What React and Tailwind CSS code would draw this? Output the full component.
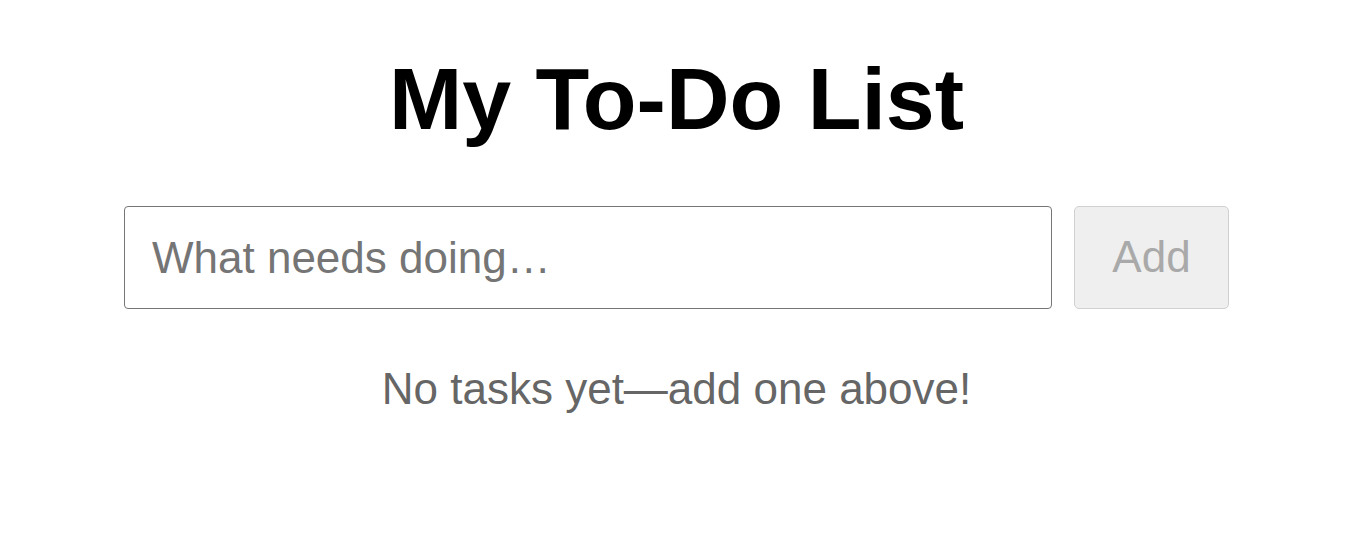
import { useState } from 'react';

export default function App() {
  const [tasks, setTasks] = useState([]);
  const [text, setText] = useState('');

  function addTask(e) {
    e.preventDefault();
    if (!text.trim()) return;
    setTasks(ts => [...ts, { id: Date.now(), title: text.trim() }]);
    setText('');
  }

  return (
    <div className="min-h-screen bg-white flex justify-center pr-[4px] font-['Liberation_Sans',Arial,sans-serif]">
      <div className="w-[1105px]">
        <h1 className="mt-[48px] text-center text-[88px] leading-[1.15] font-bold text-black">My To-Do List</h1>

        <form onSubmit={addTask} className="mt-[57px] flex gap-[22px]">
          <input
            value={text}
            onChange={e => setText(e.target.value)}
            placeholder="What needs doing…"
            className="flex-1 h-[103px] px-[27px] text-[44px] leading-[1.15] text-black placeholder:text-[#757575] border border-[#767676] rounded-[4px] outline-none"
          />
          <button
            type="submit"
            disabled={!text.trim()}
            className="w-[155px] h-[103px] text-[44px] leading-[1.15] bg-[#efefef] text-[#a9a9a9] border border-[#d0d0d0] rounded-[5px]">
            Add
          </button>
        </form>

        {tasks.length === 0 ? (
          <p className="mt-[55px] text-center text-[44px] leading-[1.15] text-[#666666]">No tasks yet—add one above!</p>
        ) : (
          <ul className="mt-[55px] text-[44px] leading-[1.15]">
            {tasks.map(t => <li key={t.id}>{t.title}</li>)}
          </ul>
        )}
      </div>
    </div>
  );
}
